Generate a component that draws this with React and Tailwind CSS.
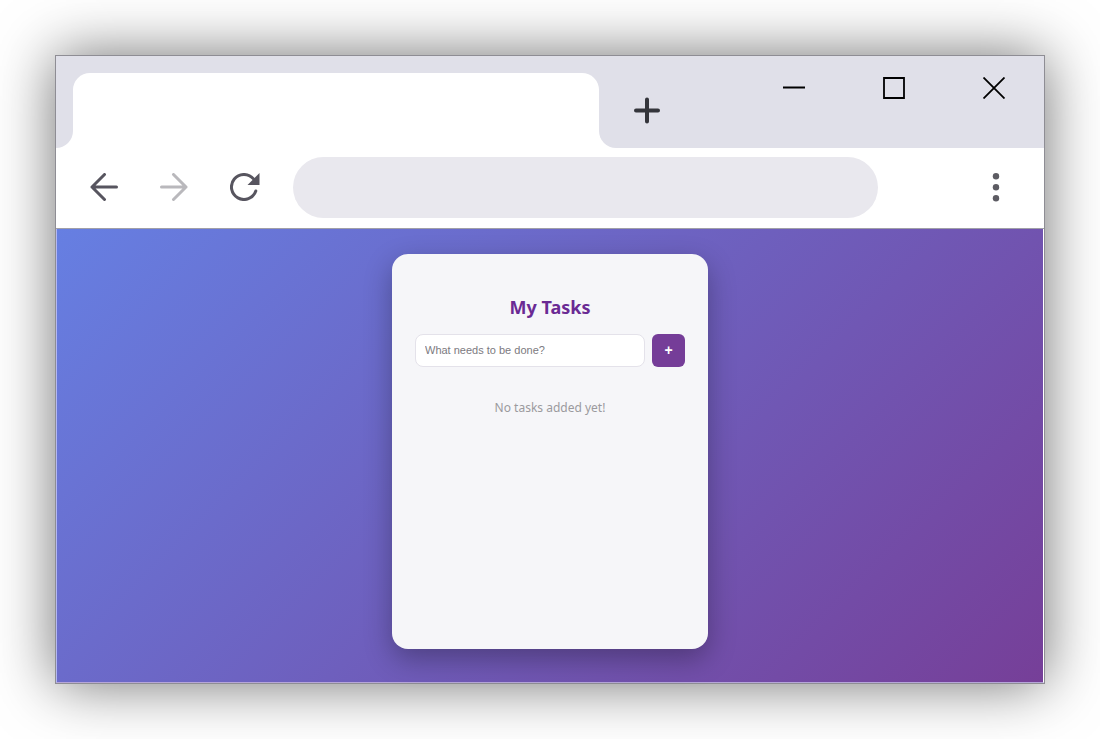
import { useState } from 'react';

function TabStrip() {
  return (
    <div className="flex items-stretch h-[92px] bg-white">
      <div className="w-[17px] bg-[#e0e0e9] rounded-br-[17px]"></div>
      <div className="w-[526px] shrink pt-[17px] bg-[#e0e0e9]">
        <div className="h-full bg-white rounded-t-[17px]"></div>
      </div>
      <div className="flex-1 flex items-start justify-between bg-[#e0e0e9] rounded-bl-[17px] pl-[35px] pr-[39px]">
        <button type="button" aria-label="New tab" className="mt-[41px]">
          <svg className="block w-[26px] h-[27px]" viewBox="0 0 26 27" fill="none" stroke="#34353b" strokeWidth="4" strokeLinecap="round">
            <path d="M2 13.5h22M13 2.5v22" />
          </svg>
        </button>
        <div className="flex gap-[78px] mt-[21px]">
          <button type="button" aria-label="Minimize">
            <svg className="block w-[22px] h-[22px]" viewBox="0 0 22 22" fill="none" stroke="#000" strokeWidth="2">
              <path d="M0 10.5h22" />
            </svg>
          </button>
          <button type="button" aria-label="Maximize">
            <svg className="block w-[22px] h-[22px]" viewBox="0 0 22 22" fill="none" stroke="#000" strokeWidth="1.8">
              <path d="M1 1h20v20H1z" />
            </svg>
          </button>
          <button type="button" aria-label="Close">
            <svg className="block w-[22px] h-[22px]" viewBox="0 0 22 22" fill="none" stroke="#000" strokeWidth="1.8">
              <path d="M.5.5l21 21M21.5.5l-21 21" />
            </svg>
          </button>
        </div>
      </div>
    </div>
  );
}

function Toolbar() {
  return (
    <div className="flex items-center bg-white border-b border-[#a09fa8] pl-[34px] pr-11 pt-[9px] pb-[10px]">
      <button type="button" aria-label="Back" className="mr-[42px] pb-0.5">
        <svg className="block w-7 h-7" viewBox="0 0 28 28" fill="none" stroke="#57555f" strokeWidth="3" strokeLinecap="round" strokeLinejoin="round">
          <path d="M26.5 14H2M14.5 1.5L2 14l12.5 12.5" />
        </svg>
      </button>
      <button type="button" aria-label="Forward" className="mr-[42px] pb-0.5">
        <svg className="block w-7 h-7" viewBox="0 0 28 28" fill="none" stroke="#b9b8bc" strokeWidth="3" strokeLinecap="round" strokeLinejoin="round">
          <path d="M1.5 14H26M13.5 1.5L26 14 13.5 26.5" />
        </svg>
      </button>
      <button type="button" aria-label="Reload" className="mr-[33px] pb-0.5">
        <svg className="block w-[30px] h-7" viewBox="0 0 30 28" fill="none">
          <path d="M25.8 18A12.5 12.5 0 1 1 23.5 5.9" stroke="#57555f" strokeWidth="3" strokeLinecap="round" />
          <path d="M29.5 0v12H17.5z" fill="#57555f" />
        </svg>
      </button>
      <input
        type="text"
        aria-label="Address"
        className="flex-1 min-w-0 h-[61px] px-8 mr-[114px] rounded-full bg-[#e9e8ee] focus:outline-none"
      />
      <button type="button" aria-label="Menu" className="pb-0.5">
        <svg className="block w-2 h-7" viewBox="0 0 8 28" overflow="visible" fill="#5d5c63">
          <circle cx="4" cy="3.3" r="3.2" />
          <circle cx="4" cy="14.3" r="3.2" />
          <circle cx="4" cy="25.3" r="3.2" />
        </svg>
      </button>
    </div>
  );
}

function TaskCard() {
  const [task, setTask] = useState('');
  const [tasks, setTasks] = useState([]);

  const handleSubmit = (e) => {
    e.preventDefault();
    if (!task.trim()) return;
    setTasks([...tasks, task.trim()]);
    setTask('');
  };

  return (
    <div className="w-[316px] min-h-[395px] px-[23px] pt-10 pb-6 rounded-2xl bg-[#f6f6f9] shadow-[0_10px_28px_rgba(0,0,0,0.3)]">
      <h1 className="text-center text-lg leading-[26px] font-bold text-[#6a2a94]">My Tasks</h1>
      <form onSubmit={handleSubmit} className="flex gap-[7px] mt-[14px]">
        <input
          type="text"
          aria-label="New task"
          value={task}
          onChange={(e) => setTask(e.target.value)}
          placeholder="What needs to be done?"
          className="flex-1 min-w-0 h-[33px] px-[9px] pb-0.5 rounded-lg border border-[#e4e2ea] bg-white font-['Liberation_Sans',sans-serif] text-[11px] text-gray-700 placeholder-[#7c7a80] focus:outline-none"
        />
        <button
          type="submit"
          aria-label="Add task"
          className="w-[33px] h-[33px] pb-0.5 rounded-md bg-[#753d98] text-white text-sm leading-5 font-['Liberation_Sans',sans-serif] font-bold"
        >
          +
        </button>
      </form>
      {tasks.length === 0 ? (
        <p className="mt-[31px] text-center text-xs leading-5 text-[#9b9a9e]">No tasks added yet!</p>
      ) : (
        <ul className="mt-4 text-xs leading-5 text-gray-700">
          {tasks.map((item, index) => (
            <li key={index} className="py-1">{item}</li>
          ))}
        </ul>
      )}
    </div>
  );
}

function App() {
  return (
    <div className="min-h-screen flex p-[55px] bg-white font-['Noto_Sans',sans-serif]">
      <div className="flex-1 flex flex-col border border-[#8e8d94] shadow-[0_0_56px_rgba(0,0,0,0.56)]">
        <TabStrip />
        <Toolbar />
        <div className="flex-1 flex flex-col border-x border-b border-l-[#b4b8f0] border-r-white border-b-[#b6a6d8]">
          <main className="flex-1 flex justify-center items-start pt-[25px] pb-8 bg-[linear-gradient(135deg,#667fe2_0%,#763f98_100%)]">
            <TaskCard />
          </main>
        </div>
      </div>
    </div>
  );
}

export default App;
